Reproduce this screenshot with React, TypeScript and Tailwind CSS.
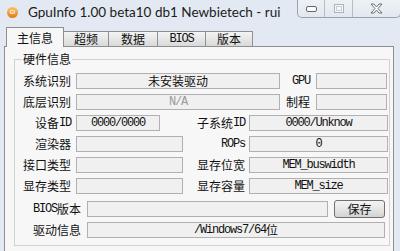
import type { ReactNode } from "react";

const CJK = '"Noto Sans CJK SC", "Liberation Sans", sans-serif';

// latin runs look like SimSun's half-width glyphs, so they go in a narrow mono
function Mixed({ text }: { text: string }) {
	const parts = text.split(/([\u4e00-\u9fff]+)/).filter(Boolean);
	return (
		<>
			{parts.map((p, i) =>
				/[\u4e00-\u9fff]/.test(p) ? (
					<span key={i}>{p}</span>
				) : (
					<span
						key={i}
						className="text-[12px] tracking-[-1.2px]"
						style={{ fontFamily: '"Liberation Mono", monospace' }}
					>
						{p}
					</span>
				)
			)}
		</>
	);
}

function Label({ text, className }: { text: string; className: string }) {
	return (
		<div className={`flex shrink-0 items-center justify-end text-[12px] leading-none text-[#111] ${className}`}>
			<Mixed text={text} />
		</div>
	);
}

function Field({
	value = "",
	className,
	muted = false,
}: {
	value?: string;
	className: string;
	muted?: boolean;
}) {
	return (
		<div
			className={`flex h-[16px] shrink-0 items-center justify-center border border-[#b0b0b0] bg-[#f0f0f0] text-[12px] leading-none ${
				muted ? "text-[#9a9a9a]" : "text-[#111]"
			} ${className}`}
		>
			<Mixed text={value} />
		</div>
	);
}

function Row({ children, className = "" }: { children: ReactNode; className?: string }) {
	return <div className={`flex h-[16px] items-center ${className}`}>{children}</div>;
}

function Tab({ label, className, active = false }: { label: string; className: string; active?: boolean }) {
	return (
		<div
			className={`shrink-0 flex items-center justify-center border border-b-0 border-[#8e8f8f] text-[12px] leading-none text-[#111] ${
				active
					? "relative z-10 -mb-px h-[20px] bg-[#f7f7f7]"
					: "-ml-px h-[15px] bg-gradient-to-b from-[#f4f4f4] to-[#d9d9d9]"
			} ${className}`}
		>
			<Mixed text={label} />
		</div>
	);
}

function CaptionButtons() {
	return (
		<div className="flex h-[18px] w-[104px] shrink-0 rounded-b-[5px] border border-t-0 border-[#97a3b1] bg-gradient-to-b from-[#eef2f6] to-[#e2e8ef]">
			<div className="flex w-[27px] items-center justify-center border-r border-[#b4bec9]">
				<svg width="11" height="6" viewBox="0 0 11 6">
					<rect x="0.5" y="0.5" width="10" height="5" rx="1.5" fill="#fff" stroke="#5d6670" />
				</svg>
			</div>
			<div className="flex w-[28px] items-center justify-center border-r border-[#b4bec9]">
				<svg width="10" height="9" viewBox="0 0 10 9">
					<rect x="0.5" y="0.5" width="9" height="8" fill="#f6f8fa" stroke="#aab2bb" />
					<rect x="2.5" y="2.5" width="5" height="4" fill="none" stroke="#c7cdd4" />
				</svg>
			</div>
			<div className="flex flex-1 items-center justify-center pb-[1px]">
				<svg width="13" height="11" viewBox="0 0 13 11">
					<path
						d="M1 1h3l2.5 3 2.5-3h3L8 5.5 12 10H9L6.5 7 4 10H1l4-4.5z"
						fill="#fff"
						stroke="#58626d"
						strokeWidth="0.9"
						strokeLinejoin="round"
					/>
				</svg>
			</div>
		</div>
	);
}

export default function App() {
	return (
		<div className="h-[251px] w-[400px] overflow-hidden bg-[#e2e9f2]" style={{ fontFamily: CJK }}>
			{/* title bar */}
			<div className="flex h-[27px] items-start pl-[7px]">
				<div
					className="mt-[7px] flex h-[11px] w-[11px] shrink-0 items-center justify-center rounded-full bg-gradient-to-b from-[#ffc25a] to-[#e07b10] text-[5px] font-bold leading-none text-white"
					style={{ fontFamily: '"Liberation Sans", sans-serif' }}
				>
					GI
				</div>
				<div className="ml-[10px] mt-[4px] text-[13.5px] leading-[16px] text-[#1b1b1b]" style={{ fontFamily: "Lato, sans-serif" }}>
					GpuInfo 1.00 beta10 db1 Newbietech - rui
				</div>
				<div className="-mr-[1px] ml-auto">
					<CaptionButtons />
				</div>
			</div>

			{/* tabs */}
			<div className="flex h-[19px] items-end pl-[6px]">
				<Tab label="主信息" active className="w-[58px]" />
				<Tab label="超频" className="w-[46px]" />
				<Tab label="数据" className="w-[50px]" />
				<Tab label="BIOS" className="w-[49px]" />
				<Tab label="版本" className="w-[48px]" />
			</div>

			{/* tab page */}
			<div className="ml-[4px] h-[220px] w-[390px] border border-[#8e8f8f] bg-[#f7f7f7] pt-[5px]">
				<fieldset className="ml-[9px] w-[376px] border border-[#d2d2d2] pb-[7px]">
					<legend className="ml-[7px] px-[1px] text-[12px] leading-[14px] text-[#111]">硬件信息</legend>
					<div className="flex flex-col gap-[5px] pt-[7px]">
						<Row>
							<Label text="系统识别" className="w-[56px]" />
							<Field value="未安装驱动" className="ml-[5px] w-[204px]" />
							<Label text="GPU" className="w-[30px]" />
							<Field className="ml-[6px] w-[71px]" />
						</Row>
						<Row>
							<Label text="底层识别" className="w-[56px]" />
							<Field value="N/A" muted className="ml-[5px] w-[204px]" />
							<Label text="制程" className="w-[30px]" />
							<Field className="ml-[6px] w-[71px]" />
						</Row>
						<Row>
							<Label text="设备ID" className="w-[56px]" />
							<Field value="0000/0000" className="ml-[5px] w-[84px]" />
							<Label text="子系统ID" className="w-[85px]" />
							<Field value="0000/Unknow" className="ml-[4px] w-[139px]" />
						</Row>
						<Row>
							<Label text="渲染器" className="w-[56px]" />
							<Field className="ml-[5px] w-[107px]" />
							<Label text="ROPs" className="w-[62px]" />
							<Field value="0" className="ml-[4px] w-[139px]" />
						</Row>
						<Row>
							<Label text="接口类型" className="w-[56px]" />
							<Field className="ml-[5px] w-[107px]" />
							<Label text="显存位宽" className="w-[62px]" />
							<Field value="MEM_buswidth" className="ml-[4px] w-[139px]" />
						</Row>
						<Row>
							<Label text="显存类型" className="w-[56px]" />
							<Field className="ml-[5px] w-[107px]" />
							<Label text="显存容量" className="w-[62px]" />
							<Field value="MEM_size" className="ml-[4px] w-[139px]" />
						</Row>
						<Row className="mt-[1px] h-[18px]">
							<Label text="BIOS版本" className="w-[66px]" />
							<Field className="ml-[6px] w-[241px]" />
							<button className="ml-[6px] flex h-[18px] w-[51px] items-center justify-center rounded-[3px] border border-[#707070] bg-gradient-to-b from-[#f3f3f3] via-[#e6e6e6] to-[#d2d2d2] text-[12px] leading-none text-[#111]">
								保存
							</button>
						</Row>
						<Row className="-mt-[1px]">
							<Label text="驱动信息" className="w-[66px]" />
							<Field value="/Windows7/64位" className="ml-[6px] w-[298px]" />
						</Row>
					</div>
				</fieldset>
			</div>
		</div>
	);
}
